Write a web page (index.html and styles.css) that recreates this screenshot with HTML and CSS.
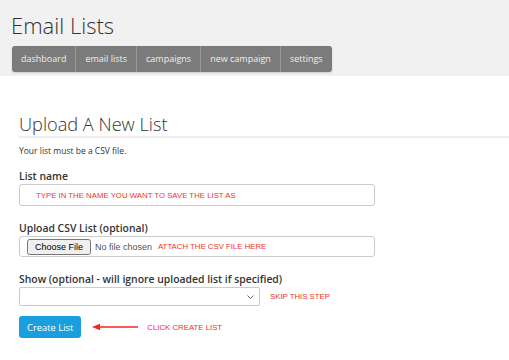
FILE: index.html
```html
<!DOCTYPE html>
<html lang="en">
<head>
    <meta charset="UTF-8">
    <title>Email Lists</title>
    <link rel="stylesheet" href="styles.css">
</head>
<body>
    <div class="top">
        <h1>Email Lists</h1>
        <div class="nav">
            <a href="#">dashboard</a>
            <a href="#">email lists</a>
            <a href="#">campaigns</a>
            <a href="#">new campaign</a>
            <a href="#">settings</a>
        </div>
    </div>

    <div class="content">
        <h2>Upload A New List</h2>
        <p class="intro">Your list must be a CSV file.</p>

        <div class="form-group">
            <label for="name">List name</label>
            <div class="field">
                <input type="text" id="name" class="text-input">
                <span class="note in-box">TYPE IN THE NAME YOU WANT TO SAVE THE LIST AS</span>
            </div>
        </div>

        <div class="form-group">
            <label for="csv">Upload CSV List (optional)</label>
            <div class="file-box">
                <input type="file" id="csv">
                <span class="note">ATTACH THE CSV FILE HERE</span>
            </div>
        </div>

        <div class="form-group">
            <label for="show">Show (optional - will ignore uploaded list if specified)</label>
            <div class="row">
                <div class="select-wrap">
                    <select id="show"><option></option></select>
                    <svg class="chev" width="7" height="4" viewBox="0 0 7 4"><path d="M0.5 0.5 L3.5 3.5 L6.5 0.5" fill="none" stroke="#666" stroke-width="1"/></svg>
                </div>
                <span class="note">SKIP THIS STEP</span>
            </div>
        </div>

        <div class="row submit-row">
            <button type="button" class="button">Create List</button>
            <svg class="arrow" width="46" height="8" viewBox="0 0 46 8"><path d="M6 4 H46" stroke="#f0281e" stroke-width="1.4"/><path d="M0 4 L8 0.8 L8 7.2 Z" fill="#f0281e"/></svg>
            <span class="note">CLICK CREATE LIST</span>
        </div>
    </div>
</body>
</html>
```

FILE: styles.css
```css
body {
    margin: 0;
    font-family: 'Open Sans', 'Liberation Sans', sans-serif;
    color: #333;
    background-color: #fff;
}
.top {
    background-color: #f1f1f1;
    padding: 12px 0 4px 11px;
}
h1 {
    margin: 0 0 7px 0;
    font-size: 22px;
    font-weight: 300;
    line-height: 26px;
    color: #333;
}
.nav {
    display: inline-flex;
    background-color: #7b7b7b;
    border-radius: 3px;
    box-shadow: 0 1px 2px rgba(0, 0, 0, 0.15);
    margin-left: 1px;
}
.nav a {
    display: block;
    padding: 0 9px;
    line-height: 26px;
    font-size: 9px;
    color: #eee;
    text-decoration: none;
    border-left: 1px solid #999;
}
.nav a:first-child {
    border-left: none;
}
.content {
    padding: 37px 0 0 19px;
}
h2 {
    margin: 0;
    font-size: 18.2px;
    font-weight: 300;
    line-height: 22px;
    padding-bottom: 1px;
    border-bottom: 2px solid #eee;
}
.intro {
    margin: 7px 0 0 0;
    font-size: 8.5px;
    line-height: 12px;
}
.form-group {
    margin-top: 12px;
}
.form-group + .form-group {
    margin-top: 15px;
}
label {
    display: block;
    font-size: 10.4px;
    font-weight: 600;
    line-height: 14px;
    margin-bottom: 1px;
}
.field {
    position: relative;
    width: 356px;
}
.text-input {
    display: block;
    box-sizing: border-box;
    width: 356px;
    height: 22px;
    border: 1px solid #ccc;
    border-radius: 3px;
    background: #fff;
}
.note {
    font-family: 'Liberation Sans', Arial, sans-serif;
    font-size: 7.8px;
    color: #f0332a;
}
.in-box {
    position: absolute;
    left: 17px;
    top: 7px;
}
.file-box {
    display: flex;
    align-items: center;
    box-sizing: border-box;
    width: 356px;
    height: 21px;
    padding-left: 7px;
    border: 1px solid #ccc;
    border-radius: 3px;
}
input[type="file"] {
    font-family: 'Liberation Sans', Arial, sans-serif;
    font-size: 9px;
    color: #555;
    width: 126px;
}
.file-box .note {
    margin-left: 5px;
}
.row {
    display: flex;
    align-items: center;
}
.select-wrap {
    position: relative;
    width: 241px;
    height: 19px;
}
select {
    display: block;
    appearance: none;
    box-sizing: border-box;
    width: 241px;
    height: 19px;
    border: 1px solid #ccc;
    border-radius: 2px;
    background: #fff;
}
.chev {
    position: absolute;
    right: 6px;
    top: 8px;
}
.row .note {
    margin-left: 10px;
}
.submit-row {
    margin-top: 10px;
}
.button {
    background-color: #1a9fde;
    color: #fff;
    border: none;
    border-radius: 3px;
    height: 22px;
    padding: 0 8px;
    font-family: 'Open Sans', sans-serif;
    font-size: 9.4px;
}
.arrow {
    margin-left: 11px;
}
.submit-row .note {
    margin-left: 9px;
}
```
